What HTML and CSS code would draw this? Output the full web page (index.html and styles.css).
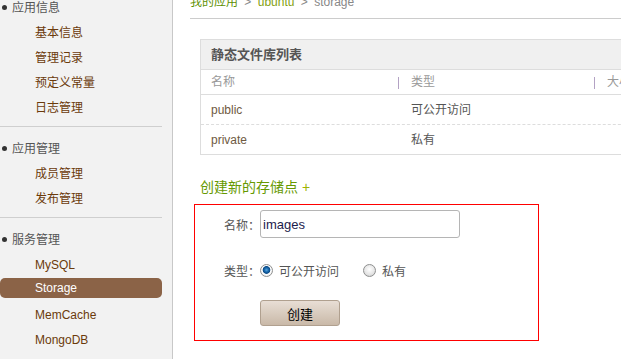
FILE: index.html
```html
<!DOCTYPE html>
<html lang="zh-CN">
<head>
    <meta charset="UTF-8">
    <title>Storage - ubuntu</title>
    <link rel="stylesheet" href="styles.css">
</head>
<body>
<div class="page">

    <!-- Left navigation -->
    <div class="sidebar">
        <div class="nav-group">
            <div class="nav-title">应用信息</div>
            <a class="nav-item" href="#">基本信息</a>
            <a class="nav-item" href="#">管理记录</a>
            <a class="nav-item" href="#">预定义常量</a>
            <a class="nav-item" href="#">日志管理</a>
        </div>
        <div class="nav-group">
            <div class="nav-title">应用管理</div>
            <a class="nav-item" href="#">成员管理</a>
            <a class="nav-item" href="#">发布管理</a>
        </div>
        <div class="nav-group">
            <div class="nav-title">服务管理</div>
            <a class="nav-item" href="#">MySQL</a>
            <a class="nav-item active" href="#">Storage</a>
            <a class="nav-item" href="#">MemCache</a>
            <a class="nav-item" href="#">MongoDB</a>
        </div>
    </div>

    <!-- Main content -->
    <div class="main">
        <div class="crumbs">
            <a class="crumb-link" href="#">我的应用</a>
            <span class="crumb-sep">&gt;</span>
            <a class="crumb-app" href="#">ubuntu</a>
            <span class="crumb-sep">&gt;</span>
            <span class="crumb-current">storage</span>
        </div>

        <div class="file-table">
            <div class="table-title">静态文件库列表</div>
            <div class="table-row table-head">
                <span class="cell">名称</span>
                <span class="cell">类型</span>
                <span class="cell">大小</span>
            </div>
            <div class="table-row table-item dashed">
                <span class="cell item-name">public</span>
                <span class="cell">可公开访问</span>
                <span class="cell"></span>
            </div>
            <div class="table-row table-item">
                <span class="cell item-name">private</span>
                <span class="cell">私有</span>
                <span class="cell"></span>
            </div>
        </div>

        <h3 class="create-title">创建新的存储点 <span class="plus">+</span></h3>

        <form class="create-form" onsubmit="return false;">
            <div class="form-row">
                <label class="form-label" for="bucket-name">名称：</label>
                <input class="text-input" type="text" id="bucket-name" value="images">
            </div>
            <div class="form-row type-row">
                <span class="form-label">类型：</span>
                <label class="radio-option"><input class="radio" type="radio" name="type" checked> 可公开访问</label>
                <label class="radio-option"><input class="radio" type="radio" name="type"> 私有</label>
            </div>
            <div class="form-row button-row">
                <button class="create-btn" type="submit">创建</button>
            </div>
        </form>
    </div>
</div>
</body>
</html>
```

FILE: styles.css
```css
body {
    margin: 0;
    font-family: "Liberation Sans", "Noto Sans CJK SC", sans-serif;
    font-size: 12px;
    background-color: #fff;
    overflow: hidden;
}

.page {
    display: flex;
    height: 359px;
}

/* Sidebar */
.sidebar {
    width: 172px;
    flex-shrink: 0;
    background-color: #f2f2f2;
    border-right: 1px solid #c8c8c8;
}

.nav-group {
    margin-right: 10px;
    padding: 9px 0 6px;
    border-bottom: 1px solid #cfcfcf;
}

.nav-group:first-child {
    margin-top: -5px;
    padding-top: 0;
}

.nav-group:last-child {
    border-bottom: none;
}

.nav-title {
    position: relative;
    line-height: 24px;
    padding: 1px 0 0 12px;
    color: #555;
}

.nav-title::before {
    content: "";
    position: absolute;
    left: 2px;
    top: 10px;
    width: 5px;
    height: 5px;
    border-radius: 50%;
    background-color: #333;
}

.nav-item {
    display: block;
    line-height: 24px;
    padding: 1px 0 0 35px;
    color: #6b3a0b;
    text-decoration: none;
}

.nav-item.active {
    line-height: 20px;
    padding-top: 0;
    margin: 1px 0 4px;
    border-radius: 5px;
    background-color: #8b6347;
    color: #fff;
}

/* Main */
.main {
    flex-grow: 1;
    padding-left: 17px;
}

.crumbs {
    margin-top: -8px;
    line-height: 20px;
    padding-bottom: 6px;
    border-bottom: 1px solid #ccc;
    color: #888;
}

.crumb-link {
    color: #5c8f00;
    text-decoration: none;
}

.crumb-app {
    color: #82a010;
    text-decoration: none;
}

.crumb-sep {
    margin: 0 3px;
}

/* Files table */
.file-table {
    width: 460px;
    margin: 20px 0 0 10px;
    border-top: 1px solid #ddd;
    border-left: 1px solid #ddd;
}

.table-title {
    height: 28px;
    line-height: 28px;
    padding: 1px 0 0 10px;
    background-color: #f0f0f0;
    border-bottom: 1px solid #ddd;
    font-size: 13px;
    font-weight: bold;
    color: #555;
}

.table-row {
    display: grid;
    grid-template-columns: 197px 196px 1fr;
    border-bottom: 1px solid #ddd;
}

.table-row.dashed {
    border-bottom-style: dashed;
}

.cell {
    position: relative;
    padding-left: 13px;
    white-space: nowrap;
}

.cell:first-child {
    padding-left: 10px;
}

.table-head {
    height: 24px;
    line-height: 25px;
    color: #999;
}

.table-head .cell + .cell::before {
    content: "";
    position: absolute;
    left: 0;
    top: 7px;
    width: 1px;
    height: 12px;
    background-color: #b3a2c4;
}

.table-item {
    box-sizing: border-box;
    height: 30px;
    line-height: 27px;
    padding-top: 2px;
    color: #555;
}

.item-name {
    color: #6f5a42;
}

/* Create form */
.create-title {
    margin: 22px 0 0 10px;
    padding-top: 1px;
    font-size: 14px;
    font-weight: normal;
    line-height: 19px;
    color: #669900;
}

.plus {
    color: #a0b400;
}

.create-form {
    width: 343px;
    margin: 7px 0 0 4px;
    padding: 5px 0 14px;
    border: 1px solid #f00;
}

.form-row {
    display: flex;
    align-items: center;
}

.form-label {
    width: 65px;
    text-align: right;
    color: #555;
}

.text-input {
    box-sizing: border-box;
    width: 200px;
    height: 28px;
    margin: 0;
    padding: 0 2px;
    border: 1px solid #b5b5b5;
    border-radius: 3px;
    font-family: "Liberation Sans", sans-serif;
    font-size: 13px;
    color: #1c1c4c;
}

.type-row {
    height: 20px;
    margin-top: 22px;
}

.radio-option {
    display: flex;
    align-items: center;
    gap: 6px;
    margin-right: 24px;
    color: #555;
}

.radio {
    appearance: none;
    width: 13px;
    height: 13px;
    margin: 0;
    border: 1px solid #8e8f8f;
    border-radius: 50%;
    background: radial-gradient(circle at 50% 40%, #fff 0, #e4e4e4 60%, #c6c6c6 100%);
}

.radio:checked {
    background: radial-gradient(circle at 50% 45%, #5aa8e0 0, #1a6aae 2px, #0b4a85 3.5px, #fff 4.2px, #dcdcdc 100%);
}

.button-row {
    margin-top: 20px;
    padding-left: 65px;
}

.create-btn {
    width: 80px;
    height: 26px;
    border: 1px solid #b0a08f;
    border-radius: 3px;
    background: linear-gradient(#e8ded5, #c9b9a8);
    font-family: "Liberation Sans", "Noto Sans CJK SC", sans-serif;
    font-size: 13px;
    color: #000;
}
```
